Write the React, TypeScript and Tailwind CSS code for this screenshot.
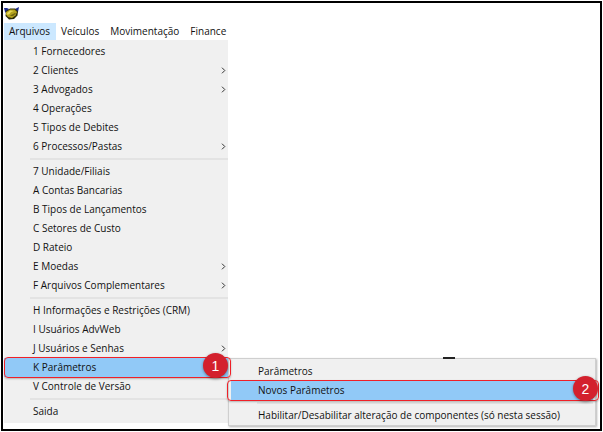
import React from 'react';

type Item = { label: string; sub?: boolean };

const groups: Item[][] = [
  [
    { label: '1 Fornecedores' },
    { label: '2 Clientes', sub: true },
    { label: '3 Advogados', sub: true },
    { label: '4 Operações' },
    { label: '5 Tipos de Debites' },
    { label: '6 Processos/Pastas', sub: true },
  ],
  [
    { label: '7 Unidade/Filiais' },
    { label: 'A Contas Bancarias' },
    { label: 'B Tipos de Lançamentos' },
    { label: 'C Setores de Custo' },
    { label: 'D Rateio' },
    { label: 'E Moedas', sub: true },
    { label: 'F Arquivos Complementares', sub: true },
  ],
  [
    { label: 'H Informações e Restrições (CRM)' },
    { label: 'I Usuários AdvWeb' },
    { label: 'J Usuários e Senhas', sub: true },
    { label: 'K Parâmetros', sub: true },
    { label: 'V Controle de Versão' },
  ],
  [{ label: 'Saida' }],
];

const AppIcon = () => (
  <svg width="16" height="14" viewBox="0 0 16 14" aria-hidden="true">
    <path d="M0 2l3 0 2 1-3 4-1-1zM15 1l-4 2 2 4 1-1z" fill="#1b2a8c" />
    <path d="M2 5l4-2.5h5l3 3-.5 4-3.500 3.500-5 .5L1.500 10z" fill="#2e2c08" />
    <path d="M2 6l4-2.500h4.500L13 6l-1.500 3.500L8 12l-4-1-2-2.500z" fill="#b3a21e" />
    <path d="M3 7l3-2.500 4 .5-3 1-1.500 2L3.500 9z" fill="#e8da5a" />
    <path d="M7 9l4-2 1 .5L9 10H6z" fill="#6f6410" />
  </svg>
);

const Chevron = () => (
  <svg width="5" height="7" viewBox="0 0 5 7" fill="none" stroke="#333" aria-hidden="true">
    <path d="M1 .7l2.800 2.800L1 6.300" />
  </svg>
);

const Badge = ({ children }: { children: React.ReactNode }) => (
  <span className="flex size-[25px] items-center justify-center rounded-full bg-[#d3202d] font-['Liberation_Sans',sans-serif] text-[14px] leading-none text-white shadow-[0_1px_3px_rgba(0,0,0,0.4)]">
    {children}
  </span>
);

const Separator = () => <div role="separator" className="my-[2px] ml-[26px] border-t-2 border-[#e3e3e3]" />;

const Submenu = () => (
  <div
    role="menu"
    className="absolute left-full top-0 w-[368px] border border-[#cfcfcf] bg-[#f0f0f0] px-[2px] pt-[3px] shadow-[1px_1px_2px_rgba(0,0,0,0.3)]"
  >
    <span className="absolute -top-[2px] left-[214px] h-[2px] w-[12px] bg-[#222]" />
    <button role="menuitem" className="flex h-[19px] w-full items-center pl-[27px]">
      Parâmetros
    </button>
    <div className="relative">
      <button role="menuitem" className="flex h-[19px] w-full items-center bg-[#91c9f7] pl-[27px]">
        Novos Parâmetros
      </button>
      <span className="pointer-events-none absolute -inset-y-px -left-1 -right-[6px] flex items-center justify-end rounded-[4px] border border-[#f02028] pb-1 shadow-[0_1px_2px_rgba(0,0,0,0.25)]">
        <Badge>2</Badge>
      </span>
    </div>
    <Separator />
    <button role="menuitem" className="flex h-[19px] w-full items-center whitespace-nowrap pl-[27px]">
      Habilitar/Desabilitar alteração de componentes (só nesta sessão)
    </button>
  </div>
);

const MenuRow = ({ item }: { item: Item }) => {
  const open = item.label === 'K Parâmetros';
  return (
    <div className="relative">
      <button
        role="menuitem"
        className={`flex h-[19px] w-full items-center justify-between whitespace-nowrap pl-[29px] pr-[2px] ${open ? 'bg-[#91c9f7]' : ''}`}
      >
        {item.label}
        {item.sub && <Chevron />}
      </button>
      {open && (
        <>
          <Submenu />
          <span className="pointer-events-none absolute -inset-y-px left-0 -right-[3px] flex items-center justify-end rounded-[4px] border border-[#f02028] pb-1 pr-[2px] shadow-[0_1px_2px_rgba(0,0,0,0.25)]">
            <Badge>1</Badge>
          </span>
        </>
      )}
    </div>
  );
};

export default function App() {
  const menus = ['Arquivos', 'Veículos', 'Movimentação', 'Finance'];

  return (
    <div className="min-h-screen bg-white p-px flex font-['Open_Sans','Noto_Sans',sans-serif] text-[10px] leading-[19px] text-[#111]">
      <div className="flex-1 border-2 border-black pl-px">
        <header className="flex h-5 items-center">
          <AppIcon />
        </header>
        <div className="w-56">
          <nav className="flex">
            {menus.map((menu, i) => (
              <button
                key={menu}
                className={`h-[17px] shrink-0 pl-[5px] pr-[6px] leading-[17px] ${i === 0 ? 'bg-[#cce8ff]' : ''}`}
              >
                {menu}
              </button>
            ))}
          </nav>
          <div role="menu" className="bg-[#f0f0f0] py-[2px]">
            {groups.map((group, i) => (
              <React.Fragment key={i}>
                {i > 0 && <Separator />}
                {group.map((item) => (
                  <MenuRow key={item.label} item={item} />
                ))}
              </React.Fragment>
            ))}
          </div>
        </div>
      </div>
    </div>
  );
}
